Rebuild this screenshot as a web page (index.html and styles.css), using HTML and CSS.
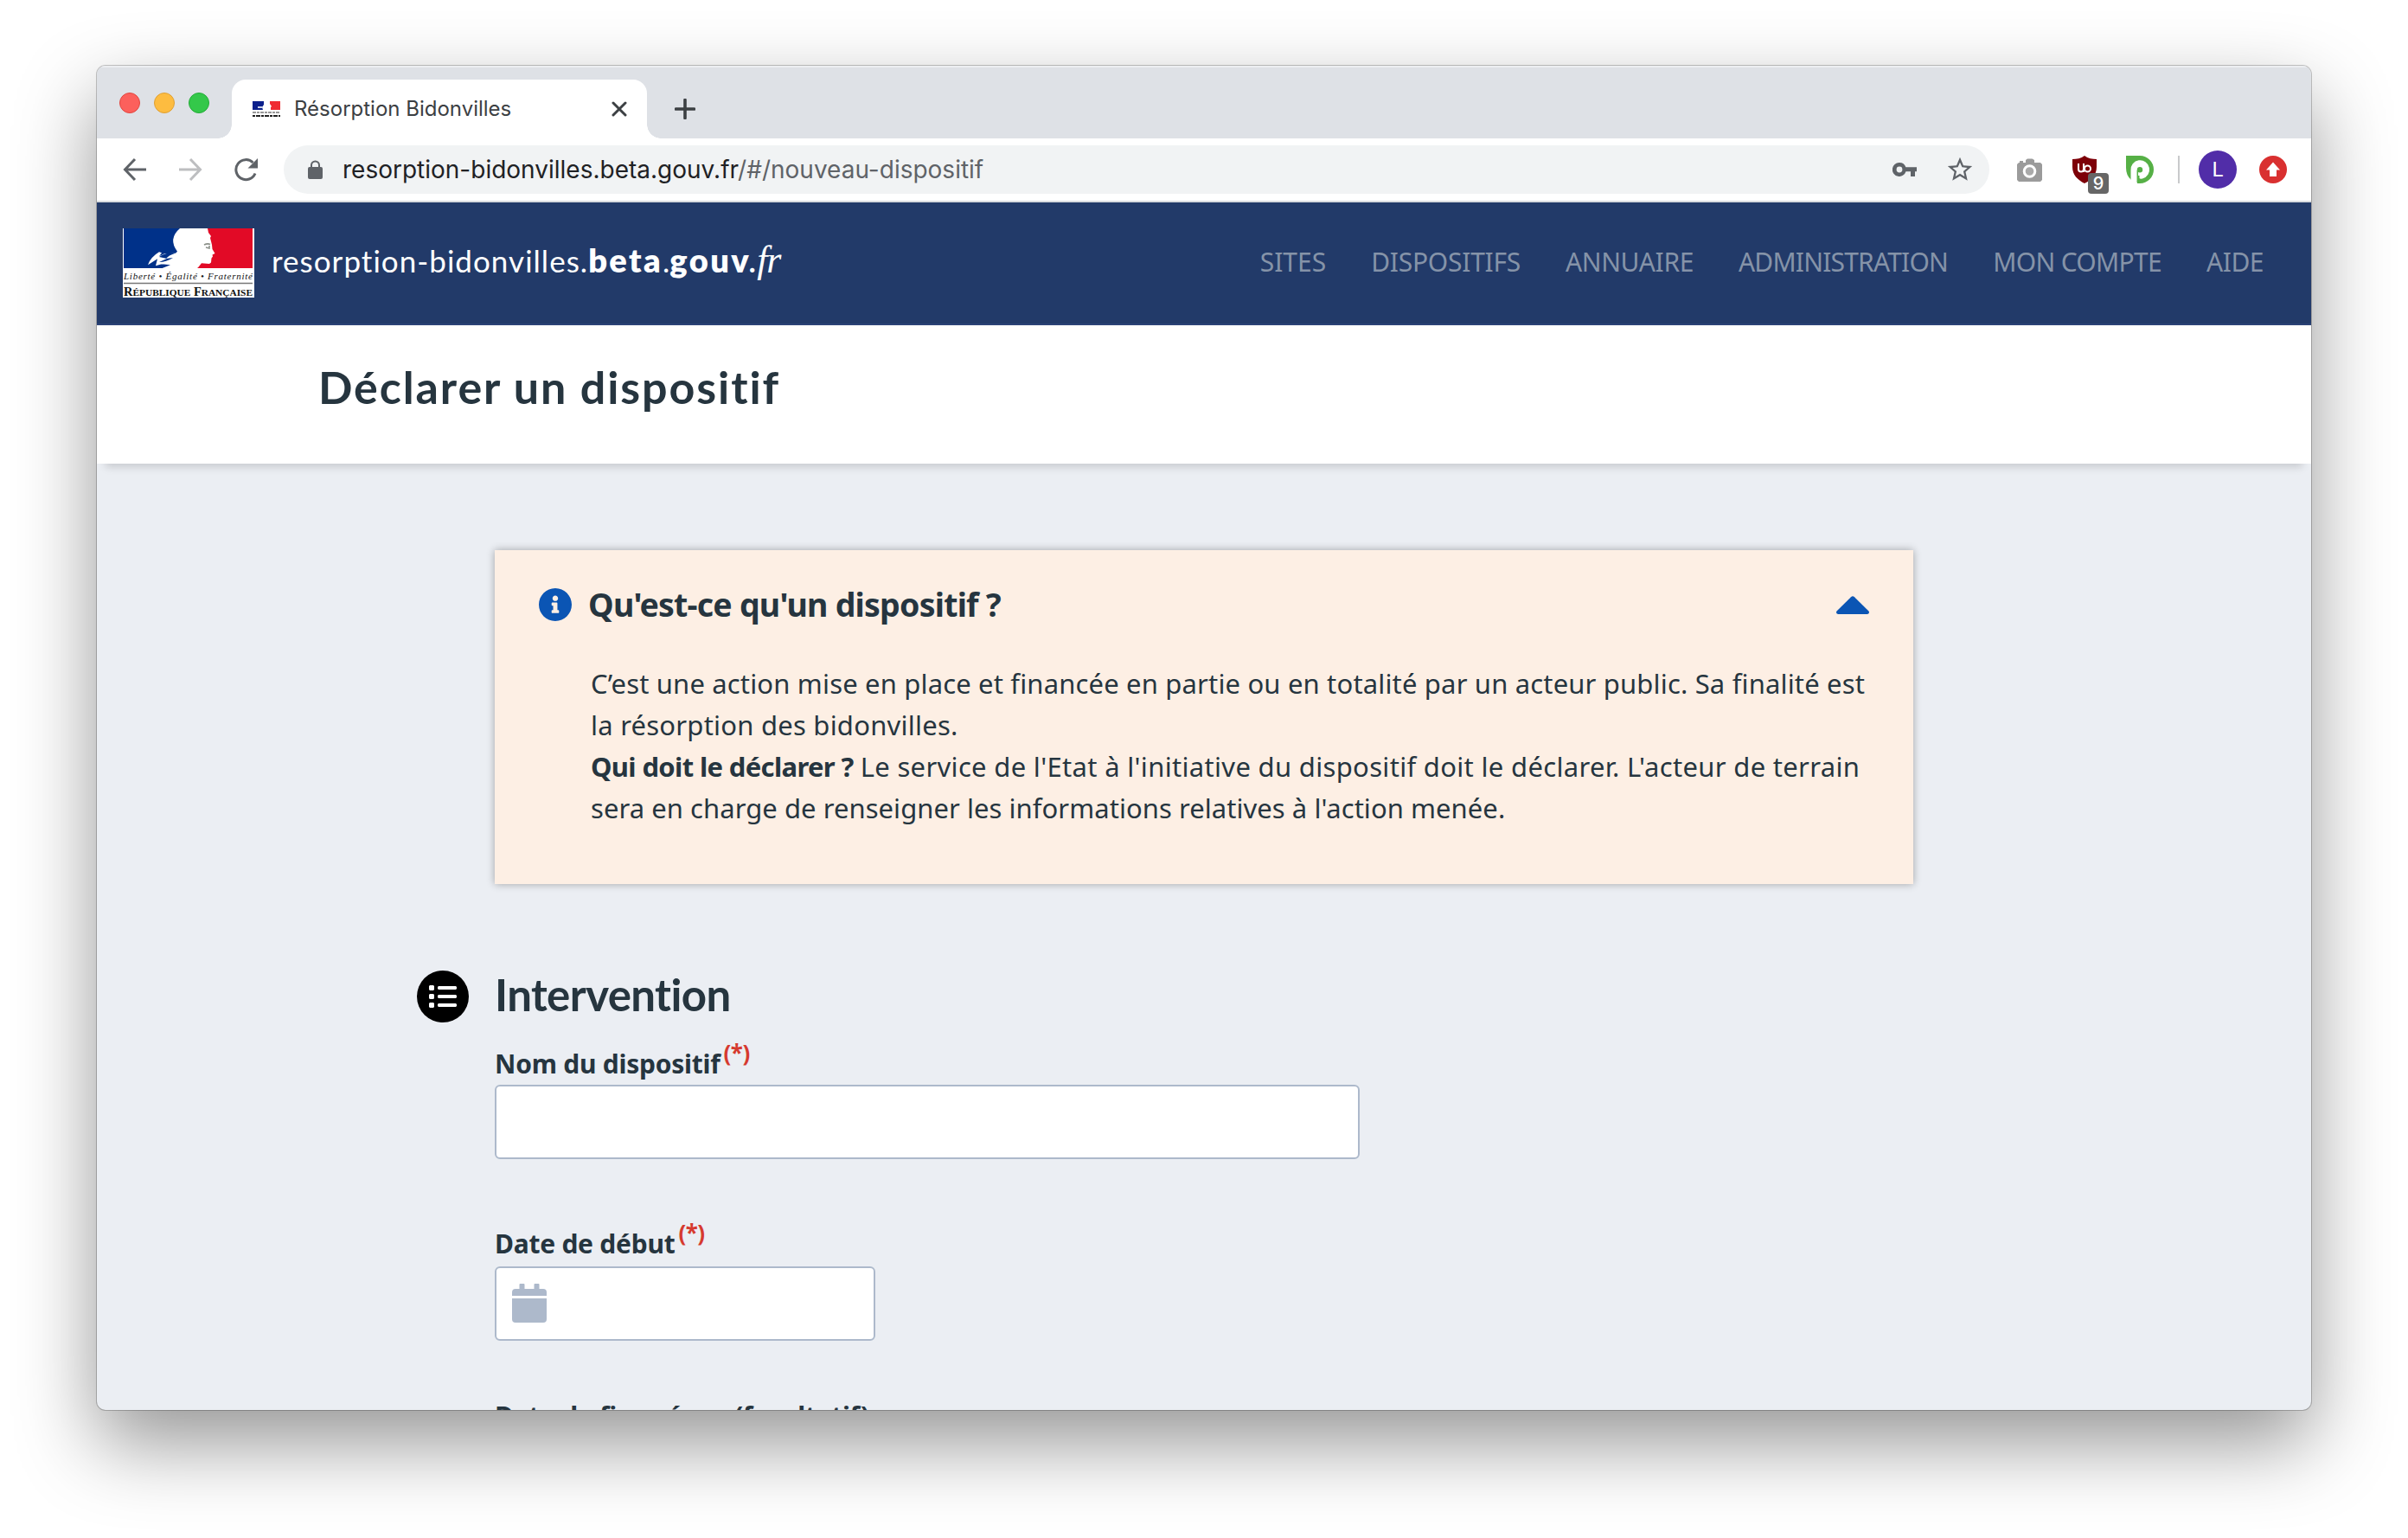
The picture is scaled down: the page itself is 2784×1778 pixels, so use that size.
FILE: index.html
```html
<!DOCTYPE html>
<html lang="fr">
<head>
<meta charset="utf-8">
<title>Résorption Bidonvilles</title>
<link rel="stylesheet" href="styles.css">
</head>
<body>
<div class="window">
  <div class="tabstrip">
    <div class="lights"><span class="light light--close"></span><span class="light light--min"></span><span class="light light--max"></span></div>
    <div class="tab">
      <svg class="favicon" viewBox="0 0 32 18" width="32" height="18"><path fill="#0b1f8c" d="M0 0h13v4l-2 3 1 3H0z"/><path fill="#ef2b32" d="M20 0h12v10H21V7l1-1-2-3z"/><path fill="#c9cfe6" d="M6 6h6v2H6z"/><path stroke="#777" stroke-width="1.600" stroke-dasharray="4 1 3 1" d="M0 13h32"/><path stroke="#222" stroke-width="2" stroke-dasharray="3 1 5 1" d="M0 17h32"/></svg>
      <span class="tab-title">Résorption Bidonvilles</span>
      <svg class="tab-close" viewBox="0 0 18 18" width="18" height="18"><path d="M2 2l14 14M16 2L2 16" stroke="#3c4043" stroke-width="3" stroke-linecap="round"/></svg>
    </div>
    <svg class="tab-new" viewBox="0 0 24 24" width="24" height="24"><path d="M12 1.500v21M1.500 12h21" stroke="#3c4043" stroke-width="3.600" stroke-linecap="round"/></svg>
  </div>
  <div class="toolbar">
    <svg class="nav-icon" viewBox="0 0 28 28" width="28" height="28"><path d="M27 14H3M14 2L2.500 14 14 26" fill="none" stroke="#5f6368" stroke-width="3"/></svg>
    <svg class="nav-icon nav-icon--fwd" viewBox="0 0 28 28" width="28" height="28"><path d="M1 14h24M14 2l11.500 12L14 26" fill="none" stroke="#bdbec0" stroke-width="3"/></svg>
    <svg class="nav-icon nav-icon--reload" viewBox="0 0 28 28" width="28" height="28"><path d="M25 18.500A11.500 11.500 0 1 1 22.500 6" fill="none" stroke="#5f6368" stroke-width="3"/><path d="M28 1v11.500H16.500z" fill="#5f6368"/></svg>
    <div class="omnibox">
      <svg viewBox="0 0 17 22" width="17" height="22"><path d="M4 9V6a4.500 4.500 0 0 1 9 0v3" fill="none" stroke="#5f6368" stroke-width="2"/><rect y="8" width="17" height="14" rx="2" fill="#5f6368"/></svg>
      <span class="url">resorption-bidonvilles.beta.gouv.fr<span class="url-path">/#/nouveau-dispositif</span></span>
      <svg class="key" viewBox="0 0 28 16" width="28" height="16"><path fill="#5f6368" fill-rule="evenodd" d="M8 0a8 8 0 0 1 7.400 5.300H28v5h-2V16h-5v-5.700h-5.500A8 8 0 1 1 8 0zm0 4.600a3.400 3.400 0 1 0 0 6.800 3.400 3.400 0 0 0 0-6.800z"/></svg>
      <svg class="star" viewBox="0 0 24 24" width="34" height="34"><path fill="#5f6368" d="M22 9.240l-7.190-.62L12 2 9.190 8.630 2 9.240l5.460 4.730L5.820 21 12 17.270 18.180 21l-1.630-7.030L22 9.240zM12 15.400l-3.760 2.270 1-4.280-3.320-2.880 4.380-.38L12 6.100l1.710 4.040 4.380.38-3.320 2.880 1 4.280L12 15.400z"/></svg>
    </div>
    <div class="extensions">
      <svg class="camera" viewBox="0 0 29 27" width="29" height="27"><path fill="#9b9b9b" d="M2 5h1V3h4v2h3V2l2-1.500h5.500L20 2v3h7l2 2v18l-2 2H2l-2-2V7z"/><circle cx="14.500" cy="15" r="6.300" fill="#aaa" stroke="#fff" stroke-width="3"/></svg>
      <span class="ublock"><svg viewBox="0 0 28 32" width="28" height="32"><path fill="#7d0008" d="M14 0c4 3 9 4 14 4v9c0 9-6 15-14 19C6 28 0 22 0 13V4c5 0 10-1 14-4z"/><path fill="none" stroke="#fff" stroke-width="2" d="M7 9v6.500q0 3 3 3t3-3V9M13 9v10"/><circle cx="17.500" cy="15" r="3.500" fill="none" stroke="#fff" stroke-width="2"/></svg><span class="badge">9</span></span>
      <svg class="pext" viewBox="0 0 32 32" width="32" height="32"><path fill="#56b046" d="M0 0h16a16 16 0 0 1 0 32h-3V20l-7 8q-6-5-6-14z"/><path fill="#fff" d="M5.500 29V17a10.800 10.800 0 1 1 13.500 9.500q-3 .5-3.500-.5v-3h-2.500v9h-2V31z"/><circle cx="16" cy="16.300" r="3.200" fill="#56b046"/><path stroke="#56b046" stroke-width="1.500" fill="none" d="M13.300 31V17"/></svg>
      <span class="divider"></span>
      <span class="avatar">L</span>
      <svg class="update" viewBox="0 0 32 32" width="32" height="32"><circle cx="16" cy="16" r="16" fill="#d93030"/><path fill="#fff" d="M16 7.500l8 9h-4V24h-8v-7.500H8z"/></svg>
    </div>
  </div>
  <header class="site-header">
    <svg class="emblem" viewBox="0 0 152 80" width="152" height="80">
      <rect width="152" height="80" fill="#fff"/>
      <path fill="#003189" d="M1 0h66v46H1z"/>
      <path fill="#e20a26" d="M90 0h60v46H84z"/>
      <path fill="#fff" d="M66 0h32l1 5 3 4-1 2 2 8 .5 5 3 5-3 1.500.5 2-1.500 2-.5 5-2 1.500-9-.8-4 5-1.500 1H45l10-4-10-1 14-4-21 6 2-8-11 7q3-9 13-15l3 1-3 4 6-3 13-.5 2-2Q52 12 66 0z"/>
      <path fill="#003189" d="M42 33q8-6 18-4-7 2-10 6l8-1q-8 5-16 5l9-4z"/>
      <path stroke="#8b9089" stroke-width="1.600" fill="none" d="M94 19q4-2 7-.5M96 22l4 1v-3"/>
      <text class="emblem-motto" x="1" y="59" textLength="149">Liberté • Égalité • Fraternité</text>
      <path stroke="#777" stroke-width="1.300" d="M1 63.500h149"/>
      <text class="emblem-name" x="1" y="78" textLength="149" lengthAdjust="spacingAndGlyphs">R<tspan class="sc">ÉPUBLIQUE</tspan> F<tspan class="sc">RANÇAISE</tspan></text>
    </svg>
    <div class="brand"><span class="brand-name">resorption-bidonvilles.</span><span class="brand-bold">beta</span><span class="brand-dot">.</span><span class="brand-bold brand-gouv">gouv</span><span class="brand-fr">.fr</span></div>
    <nav class="menu"><a class="m-sites">SITES</a><a class="m-disp">DISPOSITIFS</a><a class="m-ann">ANNUAIRE</a><a class="m-adm">ADMINISTRATION</a><a class="m-compte">MON COMPTE</a><a class="m-aide">AIDE</a></nav>
  </header>
  <div class="page-head"><h1>Déclarer un dispositif</h1></div>
  <main class="content">
    <section class="notice">
      <div class="notice-head">
        <svg viewBox="8 8 496 496" width="38" height="38"><path fill="#0b55b4" d="M256 8C119 8 8 119 8 256s111 248 248 248 248-111 248-248S393 8 256 8zm0 110c23 0 42 19 42 42s-19 42-42 42-42-19-42-42 19-42 42-42zm56 254c0 7-5 12-12 12h-88c-7 0-12-5-12-12v-24c0-7 5-12 12-12h12v-64h-12c-7 0-12-5-12-12v-24c0-7 5-12 12-12h64c7 0 12 5 12 12v100h12c7 0 12 5 12 12z"/></svg>
        <h2>Qu'est-ce qu'un dispositif ?</h2>
        <svg class="caret" viewBox="0 0 38 21" width="38" height="21"><path fill="#0b55b4" d="M2 21q-3-1-1.500-3.500L17 1.200q2-1.800 4 0l16.500 16.300Q39 20 36 21z"/></svg>
      </div>
      <p class="notice-text"><span class="l1">C’est une action mise en place et financée en partie ou en totalité par un acteur public. Sa finalité est</span><br><span class="l2">la résorption des bidonvilles.</span><br><b>Qui doit le déclarer ?</b> <span class="l3">Le service de l'Etat à l'initiative du dispositif doit le déclarer. L'acteur de terrain</span><br><span class="l4">sera en charge de renseigner les informations relatives à l'action menée.</span></p>
    </section>
    <section class="form">
      <div class="section-title">
        <span class="section-icon"><svg viewBox="0 0 32 26" width="32" height="26"><path fill="#fff" d="M1 0h4l1 1v4l-1 1H1L0 5V1zM1 10h4l1 1v4l-1 1H1l-1-1v-4zM1 20h4l1 1v4l-1 1H1l-1-1v-4zM11 1h20l1 1v2l-1 1H11l-1-1V2zM11 11h20l1 1v2l-1 1H11l-1-1v-2zM11 21h20l1 1v2l-1 1H11l-1-1v-2z"/></svg></span>
        <h2>Intervention</h2>
      </div>
      <div class="field"><label>Nom du dispositif<sup>(*)</sup></label><div class="input"></div></div>
      <div class="field field--start"><label>Date de début<sup>(*)</sup></label><div class="input input--date"><svg viewBox="0 0 40 45" width="40" height="45"><path fill="#adb9cb" d="M9.500 0h4q1 0 1 1v5h11V1q0-1 1-1h4q1 0 1 1v5H36q4 0 4 4v4H0v-4q0-4 4-4h4.500V1q0-1 1-1zM0 17h40v24q0 4-4 4H4q-4 0-4-4z"/></svg></div></div>
      <div class="field field--end"><label>Date de fin prévue (facultatif)</label></div>
    </section>
  </main>
</div>
</body>
</html>
```
FILE: styles.css
```css
* { box-sizing: border-box; }
html { background: #fff; }
body { margin: 0; height: 1778px; padding: 76px 0 0 112px; overflow: hidden; color: #26353f; font-family: "Noto Sans", sans-serif; }
svg { display: block; flex: none; }
h1, h2, p { margin: 0; }
.window { width: 2560px; height: 1554px; border-radius: 10px; overflow: hidden; background: #ebeef3; display: flex; flex-direction: column; box-shadow: 0 0 0 1px rgba(0,0,0,.22), 0 38px 92px rgba(0,0,0,.42); }
.tabstrip { height: 84px; flex: none; background: #dee1e6; display: flex; align-items: flex-end; border-top: 2px solid #eceef1; }
.lights { display: flex; gap: 16px; padding: 0 0 29px 26px; width: 156px; }
.light { width: 24px; height: 24px; border-radius: 50%; border: 1px solid; }
.light--close { background: #fc605c; border-color: #e2463f; }
.light--min { background: #fdbc40; border-color: #dfa033; }
.light--max { background: #34c84a; border-color: #24ac38; }
.tab { position: relative; width: 480px; height: 68px; background: #fff; border-radius: 16px 16px 0 0; display: flex; align-items: center; padding: 0 23px 0 24px; }
.tab::before, .tab::after { content: ""; position: absolute; bottom: 0; width: 16px; height: 16px; }
.tab::before { left: -16px; background: radial-gradient(circle at 0 0, transparent 15.500px, #fff 16px); }
.tab::after { right: -16px; background: radial-gradient(circle at 100% 0, transparent 15.500px, #fff 16px); }
.favicon { margin-top: -1px; }
.tab-title { font: 24px/30px Inter, sans-serif; color: #3c4043; margin-left: 16px; flex: 1; white-space: nowrap; }
.tab-new { margin: 0 0 22px 32px; }
.toolbar { height: 74px; flex: none; background: #fff; border-bottom: 2px solid #d9dcdf; display: flex; align-items: center; padding-left: 30px; }
.nav-icon--fwd, .nav-icon--reload { margin-left: 36px; }
.omnibox { width: 1972px; height: 56px; border-radius: 28px; background: #f1f3f4; margin-left: 30px; display: flex; align-items: center; padding: 0 17px 0 28px; }
.url { font: 28px/36px Inter, sans-serif; color: #202124; margin-left: 23px; flex: 1; white-space: nowrap; }
.url-path { color: #5f6368; }
.star { margin-left: 33px; }
.extensions { display: flex; align-items: center; }
.camera { margin-left: 32px; }
.ublock { position: relative; margin-left: 35px; }
.badge { position: absolute; left: 18px; top: 20px; width: 24px; height: 24px; border-radius: 4px; background: #666; color: #fff; font: 500 20px/25px Inter, sans-serif; text-align: center; }
.pext { margin-left: 34px; }
.divider { width: 2px; height: 32px; background: #c9cacc; margin-left: 28px; }
.avatar { width: 44px; height: 44px; border-radius: 50%; background: #512da8; color: #fff; font: 24px/44px Roboto, sans-serif; text-align: center; margin-left: 22px; }
.update { margin-left: 26px; }
.site-header { height: 142px; flex: none; background: #223a69; border-bottom: 2px solid #2b4276; display: flex; align-items: center; padding: 0 55px 0 30px; color: #fff; }
.emblem-motto { font: italic 11px "Liberation Serif", serif; fill: #111; }
.emblem-name { font: bold 14px "Liberation Serif", serif; fill: #111; }
.sc { font-size: 11px; }
.brand { font-family: Lato, sans-serif; font-size: 35px; line-height: 44px; margin: -7px 0 0 20px; flex: 1; white-space: nowrap; }
.brand-name { letter-spacing: 1.030px; }
.brand-bold { font-weight: 800; font-size: 38px; letter-spacing: 2.400px; }
.brand-fr { font-family: "Liberation Serif", serif; font-style: italic; font-size: 44px; letter-spacing: -1px; margin-left: -3px; }
.menu { display: flex; gap: 52px; color: #8593a8; font-size: 30px; line-height: 40px; margin-top: -2px; white-space: nowrap; }
.m-sites { letter-spacing: 0; }
.m-disp { letter-spacing: -.25px; }
.m-ann { letter-spacing: -.4px; }
.m-adm { letter-spacing: -.8px; }
.m-compte { letter-spacing: -.68px; }
.m-aide { letter-spacing: -.5px; }
.page-head { height: 160px; flex: none; background: #fff; padding: 41px 0 0 256px; box-shadow: 0 14px 9px -10px rgba(0,0,0,.15); position: relative; }
.page-head h1, .section-title h2 { font: 700 52px/60px Lato, sans-serif; letter-spacing: 1.900px; white-space: nowrap; font-variant-ligatures: none; }
.content { padding: 100px 460px 0; }
.notice { height: 386px; background: #fdefe4; box-shadow: 0 0 9px rgba(0,0,0,.32); padding: 39px 51px 0; }
.notice-head { display: flex; align-items: center; height: 48px; }
.notice-head h2 { font-size: 37.500px; letter-spacing: -.78px; line-height: 48px; margin-left: 19px; flex: 1; white-space: nowrap; }
.notice-text { font-size: 31px; line-height: 48px; margin: 43px 0 0 60px; white-space: nowrap; }
.notice-text b { letter-spacing: -.65px; }
.l1 { letter-spacing: .165px; }
.l2 { letter-spacing: .23px; }
.l3 { letter-spacing: .32px; }
.l4 { letter-spacing: .05px; }
.section-title { display: flex; align-items: center; height: 60px; margin: 100px 0 0 -90px; }
.section-title h2 { font-size: 51px; letter-spacing: -.6px; margin-top: -5px; }
.section-icon { width: 60px; height: 60px; border-radius: 50%; background: #000; display: flex; align-items: center; justify-content: center; margin-right: 30px; }
.field { height: 210px; }
.field label { display: block; height: 72px; padding-top: 28px; font-size: 30px; line-height: 40px; font-weight: 700; letter-spacing: -.25px; white-space: nowrap; }
.field--start label { padding-top: 26px; }
.field--end label { padding-top: 15px; letter-spacing: -.3px; }
sup { color: #d63a2f; font-size: 26px; line-height: 0; letter-spacing: -.5px; vertical-align: 14px; margin-left: 4px; }
.input { width: 1000px; height: 86px; background: #fff; border: 2px solid #adb9cb; border-radius: 6px; }
.input--date { width: 440px; padding: 18px; }
```
